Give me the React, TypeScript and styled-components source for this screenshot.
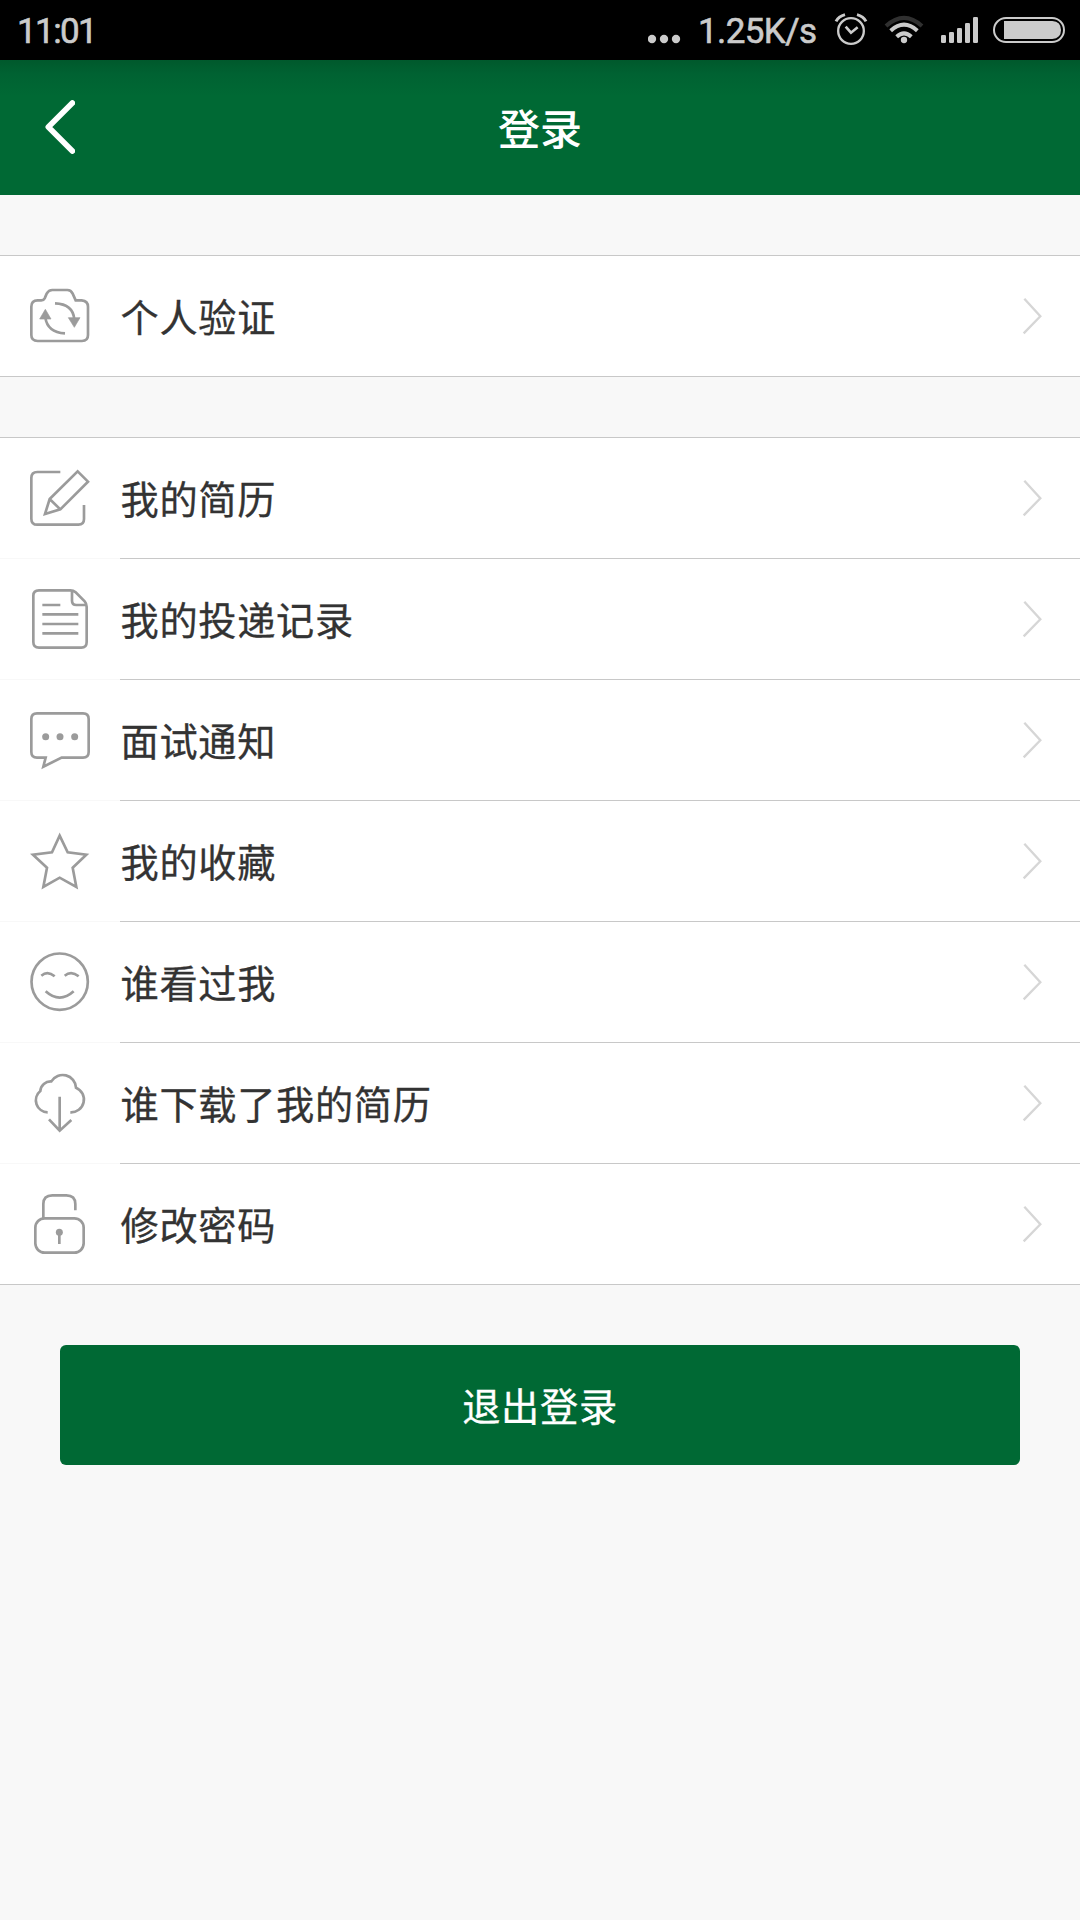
import React from "react";
import styled, { createGlobalStyle } from "styled-components";

const GlobalStyle = createGlobalStyle`
  html, body {
    margin: 0;
    padding: 0;
    background: #f8f8f8;
  }
  * { box-sizing: border-box; }
`;

const Screen = styled.div`
  display: flex;
  flex-direction: column;
  width: 1080px;
  min-height: 1920px;
  background: #f8f8f8;
  font-family: "Noto Sans CJK SC", sans-serif;
`;

const StatusBar = styled.div`
  display: flex;
  justify-content: space-between;
  align-items: center;
  height: 60px;
  padding: 0 14px 0 17px;
  background: #000;
  color: #cbcbcb;
  font-family: Roboto, "Liberation Sans", sans-serif;
  font-size: 35px;
  line-height: 63px;
`;

const StatusGroup = styled.div`
  display: flex;
  align-items: center;
`;

const StatusText = styled.span<{ $width?: number; $tracking: number }>`
  width: ${(p) => (p.$width ? `${p.$width}px` : "auto")};
  height: 60px;
  letter-spacing: ${(p) => p.$tracking}px;
  white-space: nowrap;
  -webkit-text-stroke: 0.6px #cbcbcb;
`;

const StatusGlyph = styled.svg<{ $gap: number }>`
  display: block;
  height: 60px;
  margin-right: ${(p) => p.$gap}px;
  fill: none;
  stroke: #cbcbcb;
`;

const Header = styled.header`
  display: grid;
  grid-template-columns: 120px 1fr 120px;
  align-items: center;
  height: 135px;
  background: linear-gradient(#00592c 0, #006232 14px, #006934 36px);
  color: #fff;
`;

const BackButton = styled.button`
  display: flex;
  height: 135px;
  padding: 0 0 1px 45px;
  align-items: center;
  border: 0;
  background: none;
`;

const Title = styled.h1`
  height: 135px;
  margin: 0;
  text-align: center;
  font-size: 42px;
  font-weight: 500;
  line-height: 134px;
`;

const Group = styled.ul`
  margin: 60px 0 0;
  padding: 0;
  list-style: none;
  background: #fff;
  border-top: 1px solid #c8c8c8;
  border-bottom: 1px solid #c8c8c8;
`;

const Row = styled.li`
  display: flex;
  height: 120px;

  & + & {
    height: 121px;
  }
`;

const IconCell = styled.div<{ $divided: boolean }>`
  display: flex;
  align-items: flex-end;
  width: 120px;
  padding: 0 30px 30px;
  border-top: ${(p) => (p.$divided ? "1px solid #f8f8f8" : "0")};
`;

const RowBody = styled.div<{ $divided: boolean }>`
  display: flex;
  flex: 1;
  align-items: center;
  justify-content: space-between;
  padding-right: 36px;
  border-top: ${(p) => (p.$divided ? "1px solid #c8c8c8" : "0")};
`;

const Label = styled.span`
  height: 120px;
  padding-left: 0.5px;
  color: #333;
  font-size: 38.2px;
  letter-spacing: 0.7px;
  line-height: 119px;
  -webkit-text-stroke: 0.3px #333;
`;

const LineIcon = styled.svg`
  display: block;
  width: 60px;
  height: 60px;
  overflow: visible;
  fill: none;
  stroke: #9b9b9b;
  stroke-width: 8;
`;

const LogoutButton = styled.button`
  height: 120px;
  margin: 60px 60px 0;
  padding: 0 0 1px;
  border: 0;
  border-radius: 6px;
  background: #006934;
  color: #fff;
  font-family: inherit;
  font-size: 38.2px;
  letter-spacing: 0.7px;
  line-height: 119px;
  -webkit-text-stroke: 0.3px #fff;
`;

const Chevron = () => (
  <svg width="24" height="40" viewBox="120 168 72 120" fill="none" stroke="#d6d6d6" strokeWidth="7">
    <path d="M133 176 L181 229 L131 280" />
  </svg>
);

const CameraIcon = () => (
  <LineIcon viewBox="90 138 180 180">
    <path d="M113 181 H124 Q131 181 134 175 L140 161 Q146 150 157 150 H202 Q213 150 218 161 L227 181 H245 Q264 183 264 200 V285 Q264 303 246 303 H113 Q94 303 94 285 V200 Q94 181 113 181 Z" />
    <path d="M165 190 Q219 192 223 238 M195 280 Q142 277 136 232" />
    <path d="M136 208 L153 237 H119 Z M205 233 H240 L223 262 Z" fill="#9b9b9b" stroke="#9b9b9b" strokeWidth="2" />
  </LineIcon>
);

const EditIcon = () => (
  <LineIcon viewBox="90 114 180 180">
    <path d="M181 126 H112 Q94 126 94 144 V266 Q94 284 112 284 H235 Q252 284 252 267 V225" />
    <path d="M233 124 L264 155 L181 238 L135 252 L149 207 Z M149 207 L181 238" />
  </LineIcon>
);

const DocumentIcon = () => (
  <LineIcon viewBox="90 477 180 180">
    <path d="M117 481 H211 Q220 481 227 487 L254 514 Q260 521 260 530 V636 Q260 653 244 653 H117 Q100 653 100 636 V497 Q100 481 117 481 Z" />
    <path d="M216 481 V512 Q216 525 229 525 H260 M127 525 H181 M127 553 H235 M127 582 H235 M127 610 H235" />
  </LineIcon>
);

const ChatIcon = () => (
  <LineIcon viewBox="90 90 180 180">
    <path d="M111 100 H249 Q266 100 266 117 V216 Q266 233 249 233 H185 L130 260 L137 233 H111 Q94 233 94 216 V117 Q94 100 111 100 Z" />
    <g fill="#9b9b9b" stroke="none">
      <circle cx="137" cy="170" r="10.5" />
      <circle cx="180" cy="170" r="10.5" />
      <circle cx="224" cy="170" r="10.5" />
    </g>
  </LineIcon>
);

const StarIcon = () => (
  <LineIcon viewBox="90 453 180 180">
    <path d="M179 467 L203 517 L259 524 L218 563 L229 621 L179 593 L130 621 L141 563 L99 524 L156 517 Z" />
  </LineIcon>
);

const SmileIcon = () => (
  <LineIcon viewBox="90 96 180 180">
    <circle cx="179" cy="185" r="84.5" />
    <path d="M124 167 Q143 151 164 169 M194 167 Q214 151 236 169 M137 214 Q179 252 221 214" />
  </LineIcon>
);

const CloudIcon = () => (
  <LineIcon viewBox="90 459 180 180">
    <path d="M143 577 A36 36 0 0 1 121 513 A31 31 0 0 1 154 484 A40 40 0 0 1 228 503 A38.5 38.5 0 0 1 211 577" />
    <path d="M179 530 V632 M147 598 L179 632 L214 600" />
  </LineIcon>
);

const LockIcon = () => (
  <LineIcon viewBox="90 102 180 180">
    <rect x="106" y="175" width="145" height="103" rx="28" />
    <path d="M130 177 V132 Q130 106 157 106 H199 Q226 106 226 132 V151" />
    <path d="M178 215 V252" />
    <circle cx="178" cy="217" r="10.5" fill="#9b9b9b" stroke="none" />
  </LineIcon>
);

interface Item {
  label: string;
  Icon: React.ComponentType;
}

const verification: Item[] = [{ label: "个人验证", Icon: CameraIcon }];

const account: Item[] = [
  { label: "我的简历", Icon: EditIcon },
  { label: "我的投递记录", Icon: DocumentIcon },
  { label: "面试通知", Icon: ChatIcon },
  { label: "我的收藏", Icon: StarIcon },
  { label: "谁看过我", Icon: SmileIcon },
  { label: "谁下载了我的简历", Icon: CloudIcon },
  { label: "修改密码", Icon: LockIcon },
];

const Menu = ({ items }: { items: Item[] }) => (
  <Group>
    {items.map(({ label, Icon }, index) => (
      <Row key={label}>
        <IconCell $divided={index > 0}>
          <Icon />
        </IconCell>
        <RowBody $divided={index > 0}>
          <Label>{label}</Label>
          <Chevron />
        </RowBody>
      </Row>
    ))}
  </Group>
);

const StatusIcons = () => (
  <StatusGroup>
    <StatusGlyph $gap={17} width="33" viewBox="84 0 99 180">
      <g fill="#cbcbcb" stroke="none">
        <circle cx="96" cy="117" r="12.5" />
        <circle cx="132" cy="117" r="12.5" />
        <circle cx="168" cy="117" r="12.5" />
      </g>
    </StatusGlyph>
    <StatusText $width={136} $tracking={-0.6}>1.25K/s</StatusText>
    <StatusGlyph $gap={16} width="34" viewBox="642 0 102 180" strokeWidth="7">
      <circle cx="693" cy="93" r="38.5" />
      <path d="M677 80 L693 98 L713 82" strokeWidth="8" />
      <path d="M648 64 Q656 49 675 44 M711 44 Q730 49 738 64" strokeWidth="9" />
    </StatusGlyph>
    <StatusGlyph $gap={16} width="40" viewBox="792 0 120 180" strokeWidth="12">
      <path d="M798 78 Q852 29 906 78" stroke="#303030" />
      <path d="M812 92 Q852 56 892 92 M830 110 Q852 90 874 110" />
      <circle cx="852" cy="120" r="9.5" fill="#cbcbcb" stroke="none" />
    </StatusGlyph>
    <StatusGlyph $gap={13} width="39" viewBox="960 0 117 180">
      <g fill="#cbcbcb" stroke="none">
        <rect x="963" y="105" width="15" height="24" rx="4" />
        <rect x="987" y="96" width="15" height="33" rx="4" />
        <rect x="1011" y="84" width="15" height="45" rx="4" />
        <rect x="1035" y="69" width="15" height="60" rx="4" />
        <rect x="1059" y="51" width="15" height="78" rx="4" />
      </g>
    </StatusGlyph>
    <StatusGlyph $gap={0} width="74" viewBox="1116 0 222 180">
      <rect x="1122" y="54" width="210" height="72" rx="36" strokeWidth="6" />
      <path d="M1152 63 H1297 Q1323 65 1323 90 Q1323 115 1297 117 H1152 Z" fill="#cbcbcb" stroke="none" />
    </StatusGlyph>
  </StatusGroup>
);

export default function App() {
  return (
    <>
      <GlobalStyle />
      <Screen>
        <StatusBar>
          <StatusText $tracking={-1.6}>11:01</StatusText>
          <StatusIcons />
        </StatusBar>
        <Header>
          <BackButton aria-label="返回">
            <svg width="30" height="54" viewBox="135 300 90 162" fill="none" stroke="#fff" strokeWidth="17">
              <path d="M217 309 L145 381 L217 453" strokeLinecap="round" strokeLinejoin="round" />
            </svg>
          </BackButton>
          <Title>登录</Title>
        </Header>
        <Menu items={verification} />
        <Menu items={account} />
        <LogoutButton>退出登录</LogoutButton>
      </Screen>
    </>
  );
}
